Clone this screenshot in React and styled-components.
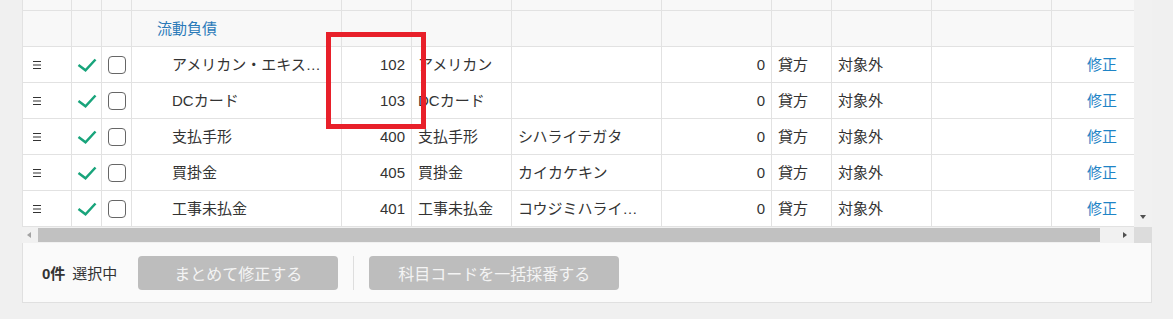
import React from 'react'
import styled, { createGlobalStyle } from 'styled-components'

const GlobalStyle = createGlobalStyle`
 body {
  margin: 0;
  background: #f0f0f0;
  font-family: 'Liberation Sans', 'Noto Sans CJK JP', sans-serif;
  font-size: 15px;
  color: #333;
 }
`

const COLS = '49px 30px 30px 210px 70px 100px 150px 110px 60px 100px 120px 82px'

const rows = [
 { name: 'アメリカン・エキスプレス', code: 102, short: 'アメリカン', kana: '', amount: 0, side: '貸方', tax: '対象外' },
 { name: 'DCカード', code: 103, short: 'DCカード', kana: '', amount: 0, side: '貸方', tax: '対象外' },
 { name: '支払手形', code: 400, short: '支払手形', kana: 'シハライテガタ', amount: 0, side: '貸方', tax: '対象外' },
 { name: '買掛金', code: 405, short: '買掛金', kana: 'カイカケキン', amount: 0, side: '貸方', tax: '対象外' },
 { name: '工事未払金', code: 401, short: '工事未払金', kana: 'コウジミハライキン', amount: 0, side: '貸方', tax: '対象外' },
]

const App = () => {
 const emptyCells = Array.from({ length: 12 })

 return (
  <Wrapper>
   <GlobalStyle />
   <Panel>
    <ScrollArea>
     <Viewport>
      <Row $group $height={10}>
       {emptyCells.map((_, i) => (
        <Cell key={i} $last={i === 11} />
       ))}
      </Row>
      <Row $group>
       <Cell />
       <Cell />
       <Cell />
       <Cell $pl={25}>
        <GroupLabel>流動負債</GroupLabel>
       </Cell>
       {emptyCells.slice(4).map((_, i) => (
        <Cell key={i} $last={i === 7} />
       ))}
      </Row>
      {rows.map((r) => (
       <Row key={r.code}>
        <Cell $pl={10}>
         <svg width="8" height="8" viewBox="0 0 8 8">
          <rect x="0" y="0" width="8" height="1" fill="#333" />
          <rect x="0" y="3.5" width="8" height="1" fill="#333" />
          <rect x="0" y="7" width="8" height="1" fill="#333" />
         </svg>
        </Cell>
        <Cell $center>
         <svg width="20" height="14" viewBox="0 0 20 14">
          <path
           d="M1.5 7 L8.5 12.3 L18.5 1.5"
           fill="none"
           stroke="#18a47b"
           strokeWidth="2.5"
          />
         </svg>
        </Cell>
        <Cell $center>
         <CheckBox />
        </Cell>
        <Cell $pl={40} $pr={12}>
         <Ellipsis>{r.name}</Ellipsis>
        </Cell>
        <Cell $right>{r.code}</Cell>
        <Cell $pr={12}>
         <Ellipsis>{r.short}</Ellipsis>
        </Cell>
        <Cell $pr={12}>
         <Ellipsis>{r.kana}</Ellipsis>
        </Cell>
        <Cell $right>{r.amount}</Cell>
        <Cell>{r.side}</Cell>
        <Cell>{r.tax}</Cell>
        <Cell />
        <Cell $right $pr={17} $last>
         <EditLink href="#">修正</EditLink>
        </Cell>
       </Row>
      ))}
     </Viewport>
     <VScroll>
      <ArrowDown />
     </VScroll>
     <HScroll>
      <ArrowLeft />
      <Thumb />
      <ArrowRight />
     </HScroll>
     <Corner />
    </ScrollArea>
    <Footer>
     <Count>
      <b>0件</b>選択中
     </Count>
     <FooterButton $width={200} disabled>
      まとめて修正する
     </FooterButton>
     <Divider />
     <FooterButton $width={250} disabled>
      科目コードを一括採番する
     </FooterButton>
    </Footer>
   </Panel>
   <Highlight />
  </Wrapper>
 )
}

// Styled Components

const Wrapper = styled.div`
 position: relative;
 padding-left: 22px;
 height: 319px;
`

const Panel = styled.div`
 width: 1130px;
 display: flex;
 flex-direction: column;
`

const ScrollArea = styled.div`
 display: grid;
 grid-template-columns: 1112px 18px;
 grid-template-rows: 227px 16px;
`

const Viewport = styled.div`
 border-left: 1px solid #e2e2e2;
 overflow: hidden;
 background: #fff;
`

const Row = styled.div`
 display: grid;
 grid-template-columns: ${COLS};
 height: ${(p) => (p.$height ? p.$height + 1 : 36)}px;
 background: ${(p) => (p.$group ? '#f8f8f8' : '#fff')};
`

const Cell = styled.div`
 box-sizing: border-box;
 display: flex;
 align-items: center;
 justify-content: ${(p) => (p.$center ? 'center' : p.$right ? 'flex-end' : 'flex-start')};
 padding-left: ${(p) => (p.$pl != null ? p.$pl : 6)}px;
 padding-right: ${(p) => (p.$pr != null ? p.$pr : 6)}px;
 ${(p) => p.$center && 'padding: 0;'}
 border-right: ${(p) => (p.$last ? 'none' : '1px solid #e2e2e2')};
 border-bottom: 1px solid #e2e2e2;
 min-width: 0;
 white-space: nowrap;
 line-height: 20px;
`

const Ellipsis = styled.span`
 overflow: hidden;
 text-overflow: ellipsis;
 white-space: nowrap;
 min-width: 0;
`

const GroupLabel = styled.span`
 color: #2a7ab8;
`

const EditLink = styled.a`
 color: #1f84c6;
 text-decoration: none;
`

const CheckBox = styled.span`
 display: block;
 box-sizing: border-box;
 width: 18px;
 height: 18px;
 border: 1.5px solid #666;
 border-radius: 4px;
 background: #fff;
`

const VScroll = styled.div`
 background: #f1f1f1;
 display: flex;
 flex-direction: column;
 justify-content: flex-end;
 align-items: center;
 padding-bottom: 8px;
`

const ArrowDown = styled.span`
 width: 0;
 height: 0;
 border-left: 3.5px solid transparent;
 border-right: 3.5px solid transparent;
 border-top: 4px solid #505050;
`

const HScroll = styled.div`
 background: #f1f1f1;
 display: flex;
 align-items: center;
 padding: 0 7px 0 5px;
`

const ArrowLeft = styled.span`
 width: 0;
 height: 0;
 border-top: 3.5px solid transparent;
 border-bottom: 3.5px solid transparent;
 border-right: 4px solid #a3a3a3;
`

const ArrowRight = styled.span`
 width: 0;
 height: 0;
 border-top: 3.5px solid transparent;
 border-bottom: 3.5px solid transparent;
 border-left: 4px solid #505050;
`

const Thumb = styled.span`
 flex: 1;
 height: 14px;
 margin: 0 23px 0 7px;
 background: #c1c1c1;
`

const Corner = styled.div`
 background: #dcdcdc;
`

const Footer = styled.div`
 box-sizing: border-box;
 height: 60px;
 display: flex;
 align-items: center;
 padding-left: 19px;
 background: #fafafa;
 border: 1px solid #e0e0e0;
 border-top: none;
`

const Count = styled.div`
 margin-right: 21px;
 b {
  font-weight: bold;
  margin-right: 7px;
 }
`

const FooterButton = styled.button`
 width: ${(p) => p.$width}px;
 height: 34px;
 border: none;
 border-radius: 4px;
 background: #bdbdbd;
 color: #f4f4f4;
 font-family: 'Liberation Sans', 'Noto Sans CJK JP', sans-serif;
 font-size: 16px;
 padding: 0;
`

const Divider = styled.span`
 width: 1px;
 height: 34px;
 margin: 0 15px;
 background: #dedede;
`

const Highlight = styled.div`
 position: absolute;
 left: 326px;
 top: 32px;
 width: 100px;
 height: 97px;
 box-sizing: border-box;
 border: 5px solid #e8202a;
 pointer-events: none;
`

export default App
